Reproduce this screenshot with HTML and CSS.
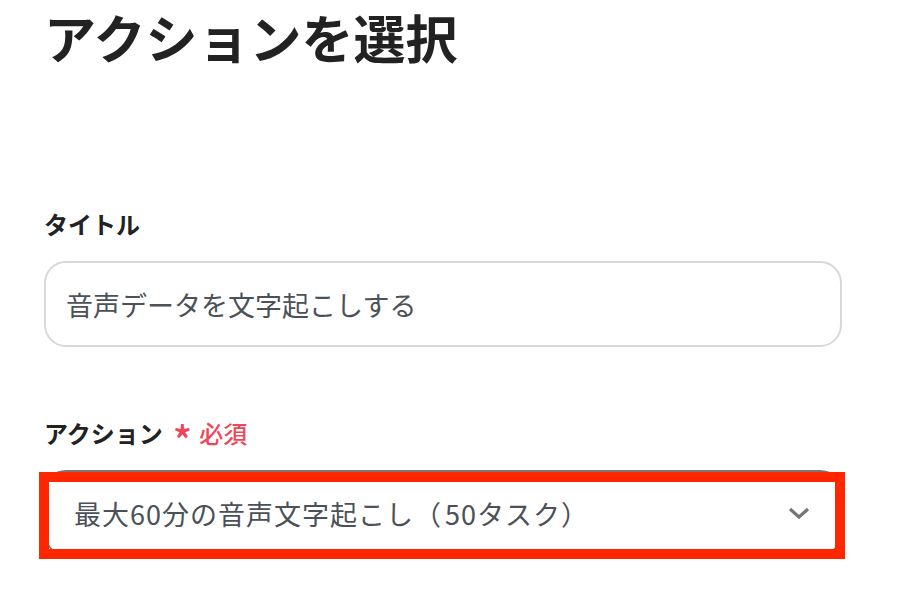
FILE: index.html
```html
<!DOCTYPE html>
<html lang="ja">
<head>
  <meta charset="UTF-8">
  <meta name="viewport" content="width=device-width, initial-scale=1.0">
  <title>アクションを選択</title>
  <link rel="stylesheet" href="styles.css">
</head>
<body>
  <div class="container">
    <h1 class="title">アクションを選択</h1>
    <div class="field">
      <label class="field-label">タイトル</label>
      <div class="text-box">音声データを文字起こしする</div>
    </div>
    <div class="field">
      <label class="field-label">アクション <span class="required"><span class="star">*</span>必須</span></label>
      <div class="select-wrap">
        <div class="select-box">
          <span class="select-text">最大60分の音声文字起こし<span class="paren-open">（</span>50タスク<span class="paren-close">）</span></span>
          <svg class="chevron" width="22" height="12" viewBox="0 0 22 12">
            <polyline points="2,2 11,10 20,2" fill="none" stroke="#767676" stroke-width="3.2"/>
          </svg>
        </div>
        <div class="highlight"></div>
      </div>
    </div>
  </div>
</body>
</html>
```

FILE: styles.css
```css
body {
  margin: 0;
  padding: 0;
  background: #fff;
  color: #222;
  font-family: "Noto Sans CJK JP", "Noto Sans", sans-serif;
}
.container {
  width: 798px;
  margin-left: 44px;
}
.title {
  margin: 0 0 131px;
  font-size: 52px;
  line-height: 74px;
  font-weight: 700;
  color: #222;
}
.field {
  margin-bottom: 67px;
}
.field-label {
  display: flex;
  align-items: center;
  height: 36px;
  margin-bottom: 20px;
  font-size: 24px;
  font-weight: 700;
  color: #222;
}
.required {
  display: flex;
  align-items: center;
  margin-left: 10px;
  color: #f0465a;
  font-weight: 500;
}
.star {
  font-size: 40px;
  font-weight: 500;
  margin-right: 7px;
  line-height: 1;
  padding-top: 14px;
}
.text-box {
  box-sizing: border-box;
  height: 86px;
  padding: 0 20px;
  display: flex;
  align-items: center;
  border: 2px solid #d5d8dc;
  border-radius: 22px;
  font-size: 27px;
  color: #4b5158;
}
.select-wrap {
  position: relative;
}
.select-box {
  box-sizing: border-box;
  height: 86px;
  padding: 0 30px 0 28px;
  display: flex;
  align-items: center;
  justify-content: space-between;
  border: 2px solid #777;
  border-radius: 22px;
  font-size: 27px;
  color: #4b5158;
}
.select-text {
  letter-spacing: 1px;
}
.paren-open,
.paren-close {
  display: inline-block;
  width: 27px;
}
.paren-open {
  text-align: right;
  padding-right: 4px;
}
.paren-close {
  text-align: left;
}
.highlight {
  position: absolute;
  top: 2px;
  left: -5px;
  width: 806px;
  height: 87px;
  box-sizing: border-box;
  border: 10px solid #ff2600;
  background: transparent;
}
```
